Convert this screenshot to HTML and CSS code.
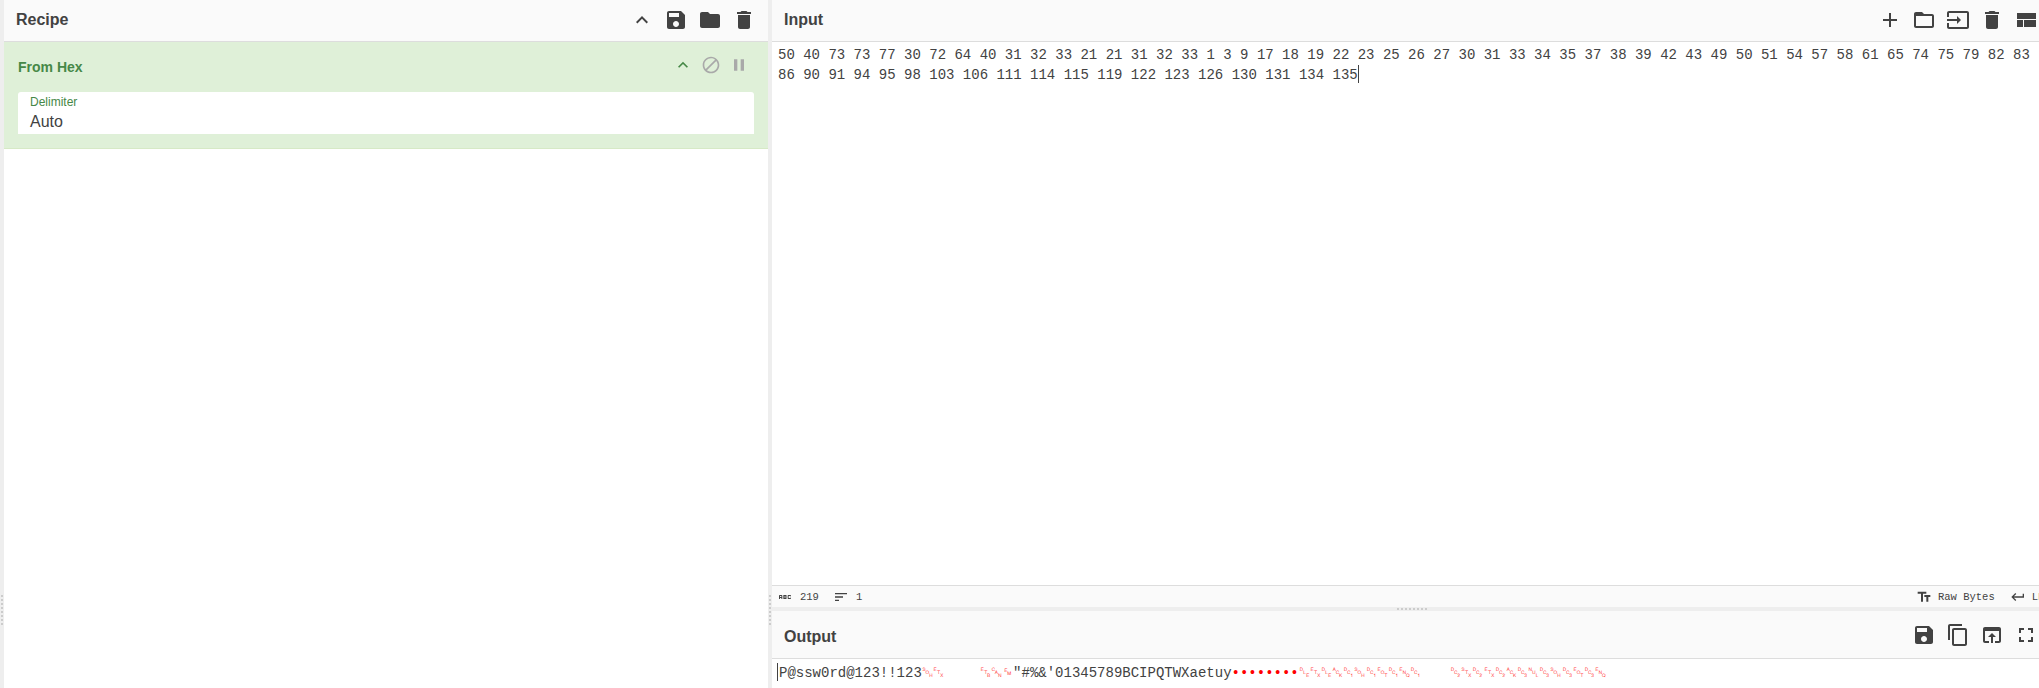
FILE: index.html
```html
<!DOCTYPE html>
<html lang="en">
<head>
<meta charset="utf-8">
<title>CyberChef</title>
<link rel="stylesheet" href="styles.css">
</head>
<body>
<svg class="defs" aria-hidden="true">
  <symbol id="i-up" viewBox="0 0 24 24"><path d="M7.41 15.41L12 10.83l4.59 4.58L18 14l-6-6-6 6z"/></symbol>
  <symbol id="i-save" viewBox="0 0 24 24"><path d="M17 3H5c-1.11 0-2 .9-2 2v14c0 1.1.89 2 2 2h14c1.1 0 2-.9 2-2V7l-4-4zm-5 16c-1.66 0-3-1.34-3-3s1.34-3 3-3 3 1.34 3 3-1.34 3-3 3zm3-10H5V5h10v4z"/></symbol>
  <symbol id="i-folder" viewBox="0 0 24 24"><path d="M10 4H4c-1.1 0-1.99.9-1.99 2L2 18c0 1.1.9 2 2 2h16c1.1 0 2-.9 2-2V8c0-1.1-.9-2-2-2h-8l-2-2z"/></symbol>
  <symbol id="i-trash" viewBox="0 0 24 24"><path d="M6 19c0 1.1.9 2 2 2h8c1.1 0 2-.9 2-2V7H6v12zM19 4h-3.5l-1-1h-5l-1 1H5v2h14V4z"/></symbol>
  <symbol id="i-add" viewBox="0 0 24 24"><path d="M19 13h-6v6h-2v-6H5v-2h6V5h2v6h6v2z"/></symbol>
  <symbol id="i-open" viewBox="0 0 24 24"><path d="M20 6h-8l-2-2H4c-1.1 0-1.99.9-1.99 2L2 18c0 1.1.9 2 2 2h16c1.1 0 2-.9 2-2V8c0-1.1-.9-2-2-2zm0 12H4V8h16v10z"/></symbol>
  <symbol id="i-input" viewBox="0 0 24 24"><path d="M21 3.01H3c-1.1 0-2 .9-2 2V9h2V4.99h18v14.03H3V15H1v4.01c0 1.1.9 1.98 2 1.98h18c1.1 0 2-.88 2-1.98v-14c0-1.11-.9-2-2-2zM11 16l4-4-4-4v3H1v2h10v3z"/></symbol>
  <symbol id="i-layout" viewBox="0 0 24 24"><path d="M3 19h6v-7H3v7zm7 0h12v-7H10v7zM3 5v6h19V5H3z"/></symbol>
  <symbol id="i-block" viewBox="0 0 24 24"><path d="M12 2C6.48 2 2 6.48 2 12s4.48 10 10 10 10-4.48 10-10S17.52 2 12 2zM4 12c0-4.42 3.58-8 8-8 1.85 0 3.55.63 4.9 1.69L5.69 16.9C4.63 15.55 4 13.85 4 12zm8 8c-1.85 0-3.55-.63-4.9-1.69L18.31 7.1C19.37 8.45 20 10.15 20 12c0 4.42-3.58 8-8 8z"/></symbol>
  <symbol id="i-pause" viewBox="0 0 24 24"><path d="M6 19h4V5H6v14zm8-14v14h4V5h-4z"/></symbol>
  <symbol id="i-copy" viewBox="0 0 24 24"><path d="M16 1H4c-1.1 0-2 .9-2 2v14h2V3h12V1zm3 4H8c-1.1 0-2 .9-2 2v14c0 1.1.9 2 2 2h11c1.1 0 2-.9 2-2V7c0-1.1-.9-2-2-2zm0 16H8V7h11v14z"/></symbol>
  <symbol id="i-browser" viewBox="0 0 24 24"><path d="M19 4H5c-1.11 0-2 .9-2 2v12c0 1.1.89 2 2 2h4v-2H5V8h14v10h-4v2h4c1.1 0 2-.9 2-2V6c0-1.1-.89-2-2-2zm-7 6l-4 4h3v6h2v-6h3l-4-4z"/></symbol>
  <symbol id="i-full" viewBox="0 0 24 24"><path d="M7 14H5v5h5v-2H7v-3zm-2-4h2V7h3V5H5v5zm12 7h-3v2h5v-5h-2v3zM14 5v2h3v3h2V5h-5z"/></symbol>
  <symbol id="i-text" viewBox="0 0 24 24"><path d="M2.5 4v3h5v12h3V7h5V4h-13zm19 5h-9v3h3v7h3v-7h3V9z"/></symbol>
  <symbol id="i-return" viewBox="0 0 24 24"><path d="M19 7v4H5.83l3.58-3.59L8 6l-6 6 6 6 1.41-1.41L5.83 13H21V7z"/></symbol>
  <symbol id="i-sort" viewBox="0 0 24 24"><path d="M3 18h6v-2H3v2zM3 6v2h18V6H3zm0 7h12v-2H3v2z"/></symbol>
  <symbol id="i-abc" viewBox="0 0 24 24"><path d="M21 11h-1.5v-.5h-2v3h2V13H21v1c0 .55-.45 1-1 1h-3c-.55 0-1-.45-1-1v-4c0-.55.45-1 1-1h3c.55 0 1 .45 1 1v1zM8 10v5H6.5v-1.5h-2V15H3v-5c0-.55.45-1 1-1h3c.55 0 1 .45 1 1zm-1.5.5h-2V12h2v-1.5zm7 1.5c.55 0 1 .45 1 1v1c0 .55-.45 1-1 1h-4V9h4c.55 0 1 .45 1 1v1c0 .55-.45 1-1 1zM11 10.5v.75h2v-.75h-2zm2 2.25h-2v.75h2v-.75z"/></symbol>
</svg>

<div class="app">
  <div class="gutter-v gutter-edge"><span class="grip-v"></span></div>

  <section class="recipe">
    <header class="pane-head">
      <h2 class="pane-title">Recipe</h2>
      <div class="tools">
        <svg class="icon"><use href="#i-up"/></svg>
        <svg class="icon"><use href="#i-save"/></svg>
        <svg class="icon"><use href="#i-folder"/></svg>
        <svg class="icon"><use href="#i-trash"/></svg>
      </div>
    </header>
    <div class="op">
      <div class="op-head">
        <span class="op-name">From Hex</span>
        <div class="op-tools">
          <svg class="icon-sm icon-green"><use href="#i-up"/></svg>
          <svg class="icon-sm icon-grey"><use href="#i-block"/></svg>
          <svg class="icon-sm icon-grey"><use href="#i-pause"/></svg>
        </div>
      </div>
      <div class="field">
        <span class="field-label">Delimiter</span>
        <span class="field-value">Auto</span>
      </div>
    </div>
  </section>

  <div class="gutter-v"><span class="grip-v"></span></div>

  <main class="io">
    <header class="pane-head">
      <h2 class="pane-title">Input</h2>
      <div class="tools tools-io">
        <svg class="icon"><use href="#i-add"/></svg>
        <svg class="icon"><use href="#i-open"/></svg>
        <svg class="icon"><use href="#i-input"/></svg>
        <svg class="icon"><use href="#i-trash"/></svg>
        <svg class="icon"><use href="#i-layout"/></svg>
      </div>
    </header>
    <div class="editor">50 40 73 73 77 30 72 64 40 31 32 33 21 21 31 32 33 1 3 9 17 18 19 22 23 25 26 27 30 31 33 34 35 37 38 39 42 43 49 50 51 54 57 58 61 65 74 75 79 82 83 86 90 91 94 95 98 103 106 111 114 115 119 122 123 126 130 131 134 135<span class="caret"></span></div>
    <div class="status">
      <div class="status-left">
        <svg class="icon-st"><use href="#i-abc"/></svg>
        <span class="stat">219</span>
        <svg class="icon-st icon-sort"><use href="#i-sort"/></svg>
        <span class="stat">1</span>
      </div>
      <div class="status-right">
        <svg class="icon-st"><use href="#i-text"/></svg>
        <span class="stat">Raw Bytes</span>
        <svg class="icon-st icon-ret"><use href="#i-return"/></svg>
        <span class="stat">LF</span>
      </div>
    </div>
    <div class="gutter-h"><span class="grip-h"></span></div>
    <header class="pane-head pane-head-out">
      <h2 class="pane-title">Output</h2>
      <div class="tools tools-io">
        <svg class="icon"><use href="#i-save"/></svg>
        <svg class="icon"><use href="#i-copy"/></svg>
        <svg class="icon"><use href="#i-browser"/></svg>
        <svg class="icon"><use href="#i-full"/></svg>
      </div>
    </header>
    <div class="editor editor-out"><span class="caret caret-out"></span>P@ssw0rd@123!!123<span class="sp">␁␃</span>&#9;<span class="sp">␗␘␙</span>"#%&amp;'01345789BCIPQTWXaetuy<span class="dots">••••••••</span><span class="sp">␐␃␐␆␑␁␑␄␑␅␑</span>&#9;<span class="sp">␒␂␒␃␒␆␓␀␓␁␓␄␓␅</span></div>
  </main>
</div>
</body>
</html>
```

FILE: styles.css
```css
* { box-sizing: border-box; }
html, body { margin: 0; height: 100%; overflow: hidden; background: #fff; }
body { font-family: "Liberation Sans", Arial, sans-serif; color: #424242; }
.defs { display: none; }

.app { display: flex; height: 688px; width: 2039px; overflow: hidden; }

.gutter-v { flex: none; width: 4px; background: #eeeeee; display: flex; align-items: flex-start; justify-content: center; padding-top: 595px; }
.grip-v { width: 2px; height: 30px; background-image: repeating-linear-gradient(to bottom, #ccc 0 2px, transparent 2px 4px); }

.recipe { flex: none; width: 764px; display: flex; flex-direction: column; }
.io { flex: 1; min-width: 0; display: flex; flex-direction: column; }

.pane-head { flex: none; height: 42px; display: flex; align-items: center; justify-content: space-between; padding: 0 12px 2px 12px; background: #fafafa; border-bottom: 1px solid #dddddd; }
.io .pane-head { padding-left: 12px; padding-right: 1px; }
.io .pane-head-out { height: 48px; padding-bottom: 0; }
.pane-title { margin: 0; font-size: 16px; font-weight: 700; color: #424242; }
.pane-head-out .pane-title { margin-top: 4px; }

.tools { display: flex; gap: 10px; }
.icon { width: 24px; height: 24px; fill: #424242; display: block; }

.op { background: #dff0d8; border-bottom: 1px solid #d6e9c6; height: 107px; padding: 0 14px; }
.op-head { height: 50px; display: flex; align-items: center; justify-content: space-between; }
.op-name { font-size: 14px; font-weight: 700; color: #468847; }
.op-tools { display: flex; gap: 8px; align-items: center; margin-right: 5px; margin-bottom: 5px; }
.icon-sm { width: 20px; height: 20px; display: block; }
.icon-green { fill: #468847; }
.icon-grey { fill: #a9a9a9; }

.field { height: 42px; background: #fff; border-radius: 3px 3px 0 0; padding: 3px 12px 0; display: flex; flex-direction: column; }
.field-label { font-size: 12px; line-height: 14px; color: #468847; }
.field-value { font-size: 16px; line-height: 20px; margin-top: 3px; color: #424242; }

.editor { flex: 1; min-height: 0; padding: 3px 0 0 6px; font: 14px/20px "Liberation Mono", "DejaVu Sans Mono", monospace; color: #424242; white-space: pre-wrap; overflow-wrap: normal; tab-size: 8; }
.editor-out { flex: none; height: 29px; padding-top: 4px; white-space: pre; overflow: hidden; }
.caret { display: inline-block; width: 0; height: 18px; border-left: 1px solid #424242; vertical-align: -4px; }
.caret-out { margin-left: -1px; margin-right: 1px; }
.sp { color: #f00; opacity: .8; letter-spacing: .15px; }
.dots { color: #f00; }

.status { flex: none; height: 22px; display: flex; justify-content: space-between; align-items: center; background: #fafafa; border-top: 1px solid #dddddd; padding-left: 5px; font: 10.5px/14px "Liberation Mono", monospace; color: #424242; }
.status-left, .status-right { display: flex; align-items: center; }
.status-right { width: 123px; flex: none; overflow: hidden; }
.icon-st { width: 16px; height: 16px; fill: #424242; flex: none; }
.stat { margin-left: 7px; white-space: nowrap; }
.status-right .stat { margin-left: 6px; }
.icon-sort { margin-left: 14px; }
.icon-ret { margin-left: 15px; }

.gutter-h { flex: none; height: 4px; background: #eeeeee; display: flex; justify-content: center; align-items: center; padding-left: 12px; }
.grip-h { width: 30px; height: 2px; background-image: repeating-linear-gradient(to right, #ccc 0 2px, transparent 2px 4px); }
```
